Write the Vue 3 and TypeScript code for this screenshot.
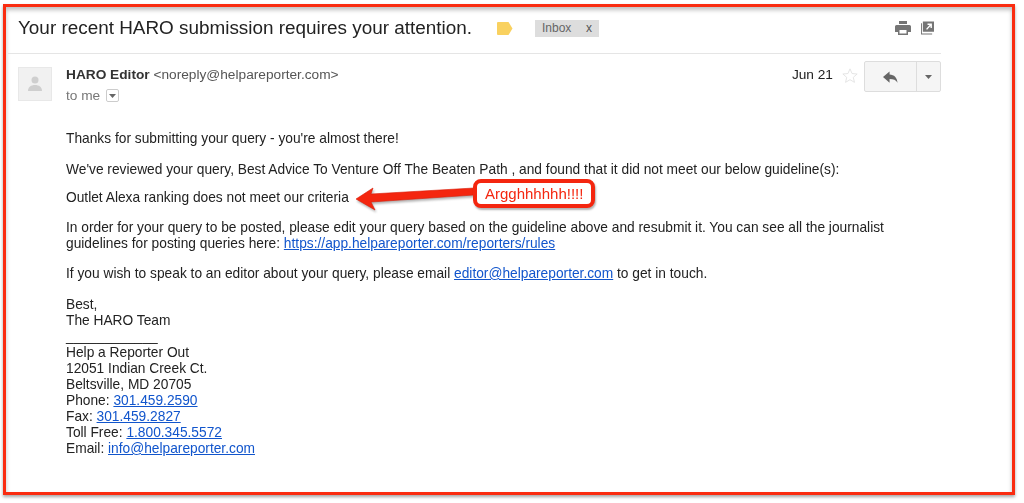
<script setup lang="ts">
const sig: { label: string; link: string }[] = [
  { label: 'Phone: ', link: '301.459.2590' },
  { label: 'Fax: ', link: '301.459.2827' },
  { label: 'Toll Free: ', link: '1.800.345.5572' },
  { label: 'Email: ', link: 'info@helpareporter.com' }
]
</script>

<template>
  <div class="page">
    <div class="frame">
      <header class="subject">
        <h1>Your recent HARO submission requires your attention.</h1>
        <svg class="tag" width="16" height="13" viewBox="0 0 16 13"><path d="M1 0h10.500L15.500 6.500 11.500 13H1a1 1 0 0 1-1-1V1a1 1 0 0 1 1-1z" fill="#f9d15f" /></svg>
        <span class="inbox">Inbox <i>x</i></span>
        <span class="tools">
          <svg width="16" height="14" viewBox="0 0 16 14"><path d="M4 0h8v3H4zM1.500 4h13A1.500 1.500 0 0 1 16 5.500V11h-3v3H3v-3H0V5.500A1.500 1.500 0 0 1 1.500 4zM4.500 9v3.500h7V9z" fill="#757575" fill-rule="evenodd" /></svg>
          <svg width="13" height="14" viewBox="0 0 14 14"><path d="M2 0h12v11H2zM0 2h1v11h11v1H0z" fill="#757575" /><path d="M6 8.500 10.500 3.500M7 3h4v4" stroke="#fff" stroke-width="1.500" fill="none" /></svg>
        </span>
      </header>
      <section class="meta">
        <div class="avatar">
          <svg width="18" height="18" viewBox="0 0 18 18"><circle cx="9" cy="5" r="3.500" fill="#cfcfcf" /><path d="M2 16c0-4 3-6 7-6s7 2 7 6z" fill="#cfcfcf" /></svg>
        </div>
        <div class="who">
          <div class="from"><b>HARO Editor</b> <span>&lt;noreply@helpareporter.com&gt;</span></div>
          <div class="to">to me <span class="mini"><svg width="7" height="4" viewBox="0 0 7 4"><path d="M0 0h7L3.500 4z" fill="#666" /></svg></span></div>
        </div>
        <div class="date">Jun 21</div>
        <svg class="star" width="16" height="17" viewBox="0 0 18 17"><path d="M9 1l2.300 5.300 5.700.5-4.300 3.800 1.300 5.600L9 13.200l-5 3 1.300-5.600L1 6.800l5.700-.5z" fill="#fff" stroke="#e2e2e2" /></svg>
        <div class="reply">
          <span class="r1"><svg width="15" height="12" viewBox="0 0 16 12"><path d="M7 0v3.200c5 .3 8 3.300 8.500 8.800-1.700-2.900-4.300-4-8.500-4v4L0 6z" fill="#666" /></svg></span>
          <span class="r2"><svg width="7" height="4" viewBox="0 0 7 4"><path d="M0 0h7L3.500 4z" fill="#666" /></svg></span>
        </div>
      </section>
      <article class="body">
        <p>Thanks for submitting your query - you're almost there!</p>
        <p class="tight">We've reviewed your query, Best Advice To Venture Off The Beaten Path , and found that it did not meet our below guideline(s):</p>
        <p class="crit">Outlet Alexa ranking does not meet our criteria
          <svg class="arrow" width="120" height="30" viewBox="0 0 120 30"><path d="M0 15 17 4 15 10 118 4 118 11 15 18 19 26z" fill="#f4260f" stroke="#d91d08" stroke-width=".6" stroke-linejoin="round" /></svg>
          <span class="callout">Argghhhhhh!!!!</span>
        </p>
        <p class="mid">In order for your query to be posted, please edit your query based on the guideline above and resubmit it. You can see all the journalist<br />guidelines for posting queries here: <a>https://app.helpareporter.com/reporters/rules</a></p>
        <p>If you wish to speak to an editor about your query, please email <a>editor@helpareporter.com</a> to get in touch.</p>
        <p class="flush">Best,<br />The HARO Team</p>
        <div class="sig">
          <div>____________</div>
          <div>Help a Reporter Out</div>
          <div>12051 Indian Creek Ct.</div>
          <div>Beltsville, MD 20705</div>
          <div v-for="s in sig" :key="s.label">{{ s.label }}<a>{{ s.link }}</a></div>
        </div>
      </article>
    </div>
  </div>
</template>

<style>
html, body { margin: 0; background: #fff; }
</style>

<style scoped>
.page { width: 1024px; height: 503px; box-sizing: border-box; padding: 4px 9px 8px 3px; overflow: hidden; font-family: "Liberation Sans", Arial, sans-serif; color: #222; }
.frame { height: 491px; box-sizing: border-box; border: 3px solid #fa2c10; box-shadow: 0 2px 3px rgba(0,0,0,.35), inset 0 3px 4px rgba(0,0,0,.25); padding: 0 71px 0 2px; filter: blur(.3px); }
.subject { display: flex; align-items: center; padding: 0 0 4px 10px; height: 42px; border-bottom: 1px solid #e5e5e5; }
h1 { margin: 0; font-size: 18.900px; font-weight: 400; color: #222; white-space: nowrap; }
.tag { margin-left: 25px; }
.inbox { margin-left: 22px; background: #ddd; color: #666; font-size: 12px; height: 17px; line-height: 17px; padding: 0 7px; width: 50px; display: flex; justify-content: space-between; }
.inbox i { font-style: normal; color: #555; }
.tools { margin-left: auto; margin-right: 7px; display: flex; gap: 10px; }
.meta { display: flex; align-items: flex-start; padding: 13px 0 0 10px; height: 77px; box-sizing: border-box; }
.avatar { width: 34px; height: 34px; box-sizing: border-box; background: #f1f1f1; border: 1px solid #e8e8e8; display: flex; align-items: center; justify-content: center; }
.who { margin-left: 14px; font-size: 13.700px; }
.from b { color: #333; }
.from span { color: #555; }
.to { margin-top: 6px; color: #777; display: flex; align-items: center; gap: 6px; }
.mini { width: 11px; height: 11px; border: 1px solid #ccc; border-radius: 2px; display: flex; align-items: center; justify-content: center; }
.date { margin-left: auto; font-size: 13.700px; color: #222; }
.star { margin: 0 6px 0 9px; }
.reply { display: flex; box-sizing: border-box; height: 31px; border: 1px solid #ddd; border-radius: 2px; background: #f5f5f5; margin-top: -6px; }
.r1 { width: 51px; display: flex; align-items: center; justify-content: center; border-right: 1px solid #ddd; }
.r2 { width: 23px; display: flex; align-items: center; justify-content: center; }
.body { margin-left: 58px; font-size: 13.750px; line-height: 16px; color: #222; }
p { margin: 0 0 15px; }
.tight { margin-bottom: 12px; }
.mid { margin-bottom: 14px; }
.flush { margin-bottom: 0; }
.crit { position: relative; margin-bottom: 14px; }
.arrow { position: absolute; left: 290px; top: -6px; filter: drop-shadow(1px 2px 1px rgba(0,0,0,.3)); }
.callout { position: absolute; left: 407px; top: -11px; border: 4px solid #f4260f; border-radius: 8px; background: #fff; color: #f4260f; font-size: 15px; line-height: 21px; padding: 0 8px; white-space: nowrap; box-shadow: 1px 2px 2px rgba(0,0,0,.3); }
a { color: #1155cc; text-decoration: underline; }
.sig { line-height: 16px; color: #222; }
</style>
